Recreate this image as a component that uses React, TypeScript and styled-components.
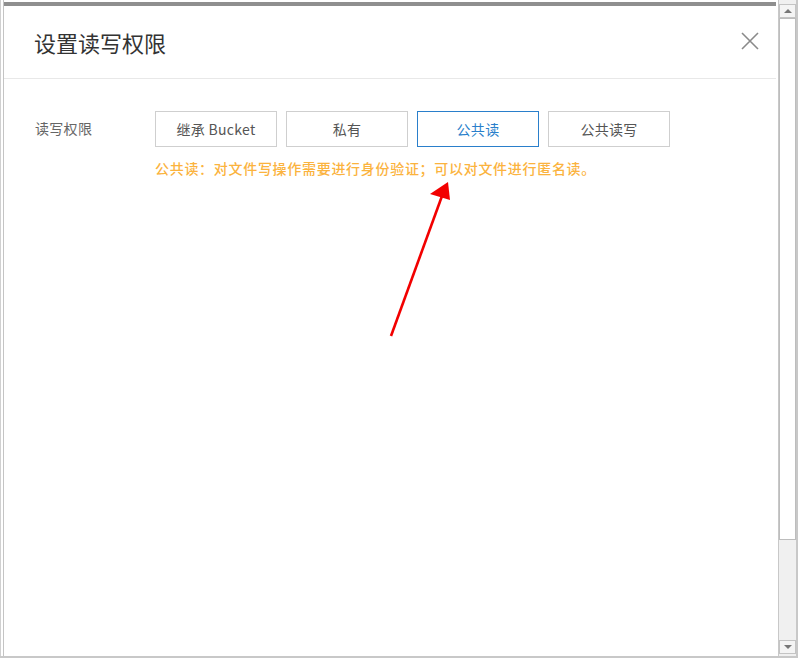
import React, { FC, useState } from "react";
import styled, { createGlobalStyle } from "styled-components";

const GlobalStyle = createGlobalStyle`
    html, body {
        margin: 0;
        padding: 0;
        background: #fff;
    }
    body {
        font-family: "Noto Sans CJK SC", "Noto Sans", sans-serif;
    }
`;

const Page = styled.div`
    width: 798px;
    height: 658px;
    display: flex;
    box-sizing: border-box;
    border-bottom: 2px solid #c8c8c8;
    position: relative;
    overflow: hidden;
`;

const Frame = styled.div`
    flex: 1;
    display: flex;
    flex-direction: column;
    border-left: 1px solid #d0d0d0;
    padding-left: 2px;
`;

const Inner = styled.div`
    flex: 1;
    display: flex;
    flex-direction: column;
    border-left: 1px solid #c4c4c4;
    padding-top: 2px;
    padding-right: 2px;
`;

const TopBar = styled.div`
    height: 4px;
    background: #8f8f8f;
`;

const Header = styled.div`
    height: 72px;
    display: flex;
    align-items: center;
    justify-content: space-between;
    padding: 0 17px 0 30px;
    border-bottom: 1px solid #e8e8e8;
`;

const Title = styled.h2`
    margin: 0;
    font-size: 22px;
    font-weight: 400;
    color: #333;
`;

const Close = styled.button`
    width: 18px;
    height: 18px;
    margin-top: -2px;
    padding: 0;
    border: none;
    background: none;
    cursor: pointer;
    display: flex;
`;

const Body = styled.div`
    padding: 32px 31px;
`;

const Row = styled.div`
    display: flex;
    align-items: flex-start;
`;

const Label = styled.div`
    width: 120px;
    line-height: 34px;
    font-size: 14px;
    color: #666;
    letter-spacing: 0.3px;
`;

const Field = styled.div`
    display: flex;
    flex-direction: column;
`;

const Options = styled.div`
    display: flex;
    gap: 9px;
`;

const Option = styled.button<{ $active?: boolean }>`
    width: 122px;
    height: 36px;
    box-sizing: border-box;
    background: #fff;
    border: 1px solid ${(p) => (p.$active ? "#2a7fcb" : "#cfcfcf")};
    color: ${(p) => (p.$active ? "#2a7fcb" : "#555")};
    font-family: "Noto Sans CJK SC", "Open Sans", sans-serif;
    font-size: 14px;
    letter-spacing: 0.3px;
    padding: 0;
    cursor: pointer;
`;

const Hint = styled.div`
    margin-top: 11px;
    font-size: 14px;
    letter-spacing: 0.7px;
    color: #fbb33e;
    font-weight: 500;
`;

const Scrollbar = styled.div`
    width: 17px;
    display: flex;
    flex-direction: column;
    border-left: 1px solid #c8c8c8;
    border-right: 2px solid #c8c8c8;
    padding-top: 4px;
    background: #f0f0f0;
`;

const Arrow = styled.div<{ $down?: boolean }>`
    height: 14px;
    box-sizing: border-box;
    border: 1px solid #c4c4c4;
    background: #f4f4f4;
    display: flex;
    align-items: center;
    justify-content: center;
    margin-top: ${(p) => (p.$down ? "auto" : "0")};
    margin-bottom: ${(p) => (p.$down ? "2px" : "0")};
    &::after {
        content: "";
        border-left: 4px solid transparent;
        border-right: 4px solid transparent;
        ${(p) =>
            p.$down
                ? "border-top: 4px solid #777;"
                : "border-bottom: 4px solid #777;"}
    }
`;

const Thumb = styled.div`
    height: 522px;
    box-sizing: border-box;
    border: 1px solid #bdbdbd;
    background: #fff;
`;

const Pointer = styled.svg`
    position: absolute;
    left: 380px;
    top: 178px;
    pointer-events: none;
`;

const options = ["继承 Bucket", "私有", "公共读", "公共读写"];

const App: FC = () => {
    const [selected, setSelected] = useState(2);

    return (
        <>
            <GlobalStyle />
            <Page>
                <Frame>
                    <Inner>
                        <TopBar />
                        <Header>
                            <Title>设置读写权限</Title>
                            <Close aria-label="close">
                                <svg width="18" height="18" viewBox="0 0 18 18">
                                    <path
                                        d="M1 1 L17 17 M17 1 L1 17"
                                        stroke="#8a8a8a"
                                        strokeWidth="1.6"
                                        fill="none"
                                    />
                                </svg>
                            </Close>
                        </Header>
                        <Body>
                            <Row>
                                <Label>读写权限</Label>
                                <Field>
                                    <Options>
                                        {options.map((o, i) => (
                                            <Option
                                                key={o}
                                                $active={i === selected}
                                                onClick={() => setSelected(i)}
                                            >
                                                {o}
                                            </Option>
                                        ))}
                                    </Options>
                                    <Hint>
                                        公共读：对文件写操作需要进行身份验证；可以对文件进行匿名读。
                                    </Hint>
                                </Field>
                            </Row>
                        </Body>
                    </Inner>
                </Frame>
                <Scrollbar>
                    <Arrow />
                    <Thumb />
                    <Arrow $down />
                </Scrollbar>
                <Pointer width="80" height="170" viewBox="0 0 80 170">
                    <line
                        x1="11"
                        y1="158"
                        x2="62"
                        y2="18"
                        stroke="#f20000"
                        strokeWidth="2.6"
                    />
                    <polygon points="68,4 50,16 70,22" fill="#f20000" />
                </Pointer>
            </Page>
        </>
    );
};

export default App;
